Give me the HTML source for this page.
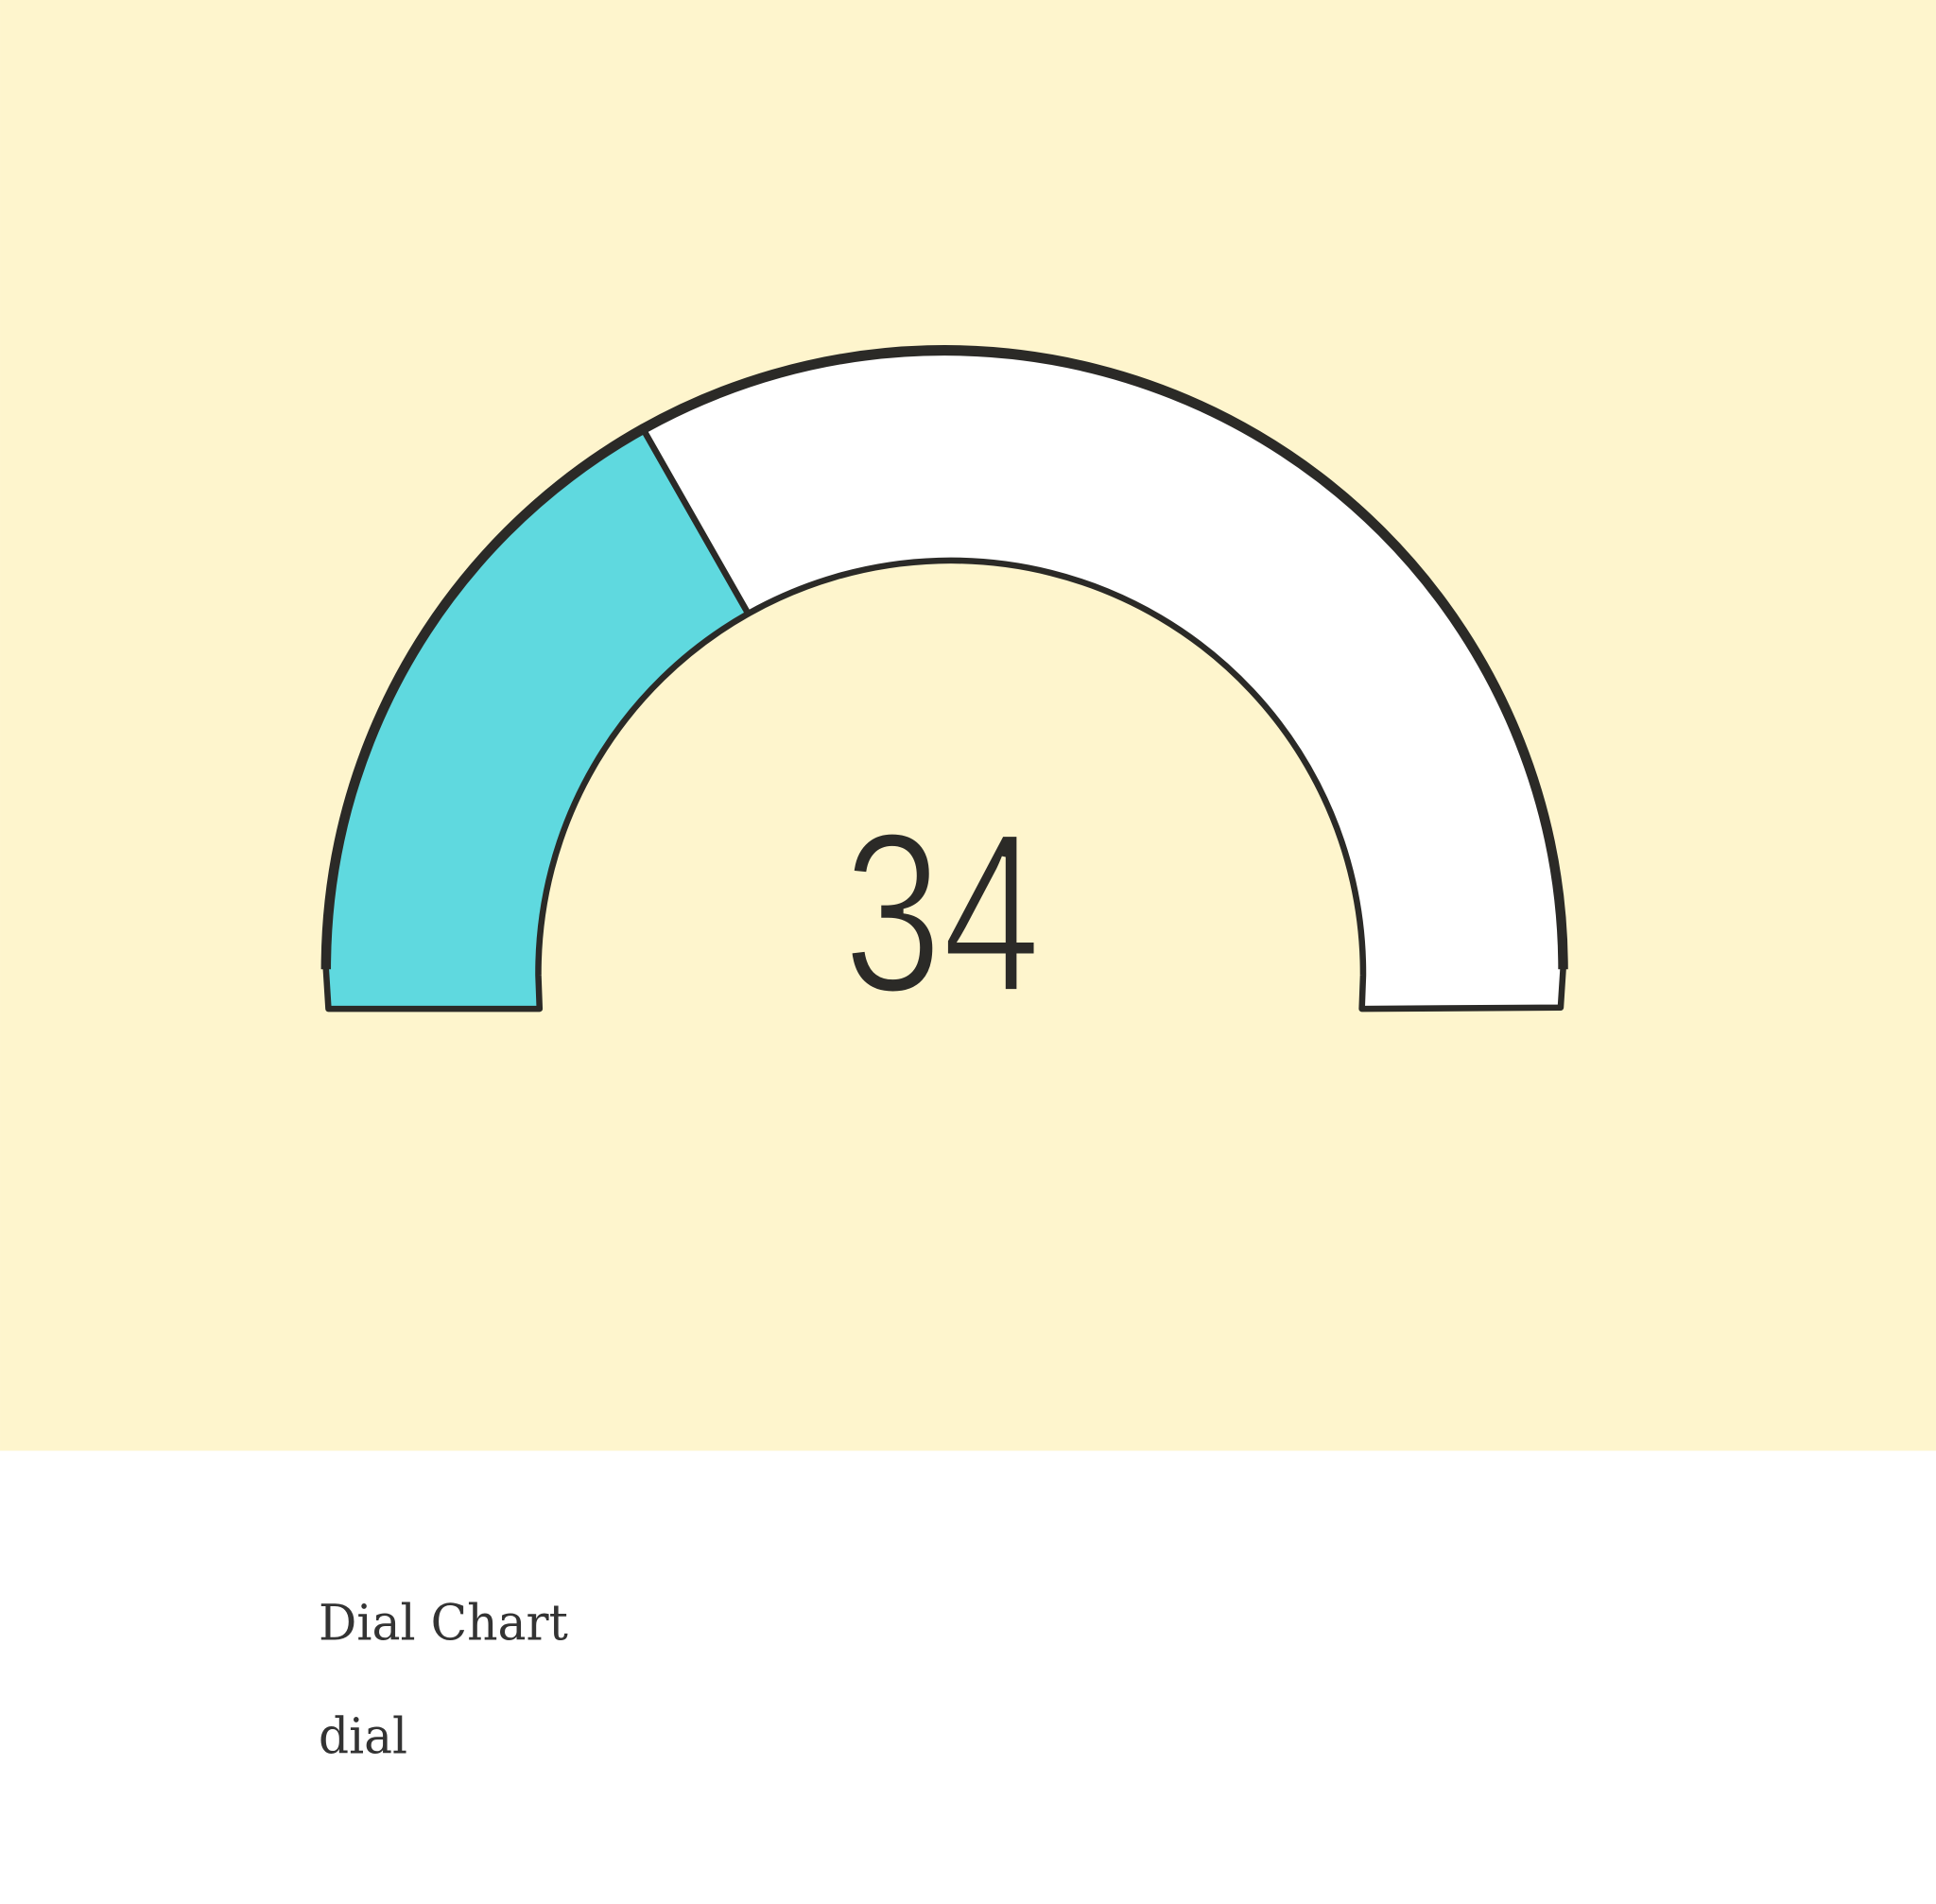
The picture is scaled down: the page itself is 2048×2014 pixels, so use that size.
<!DOCTYPE html>
<html>
<head>
<meta charset="utf-8">
<style>
  html, body { margin: 0; padding: 0; background: #fff; }
  body { width: 2048px; height: 2014px; overflow: hidden; }
  svg { display: block; }
</style>
</head>
<body>
<svg width="2048" height="2014" viewBox="0 0 1568 1542" xmlns="http://www.w3.org/2000/svg">
  <rect x="0" y="0" width="1568" height="1175" fill="#fef5cd"/>
  <rect x="0" y="1175" width="1568" height="367" fill="#ffffff"/>

  <path d="M266,817 L264,785 A501,501 0 0 1 520,346 L606,497 A334,334 0 0 0 436,790 L437,817 Z"
        fill="#5fd9df" stroke="#2b2a27" stroke-width="5" stroke-linejoin="round"/>
  <path d="M520,346 A501,501 0 0 1 1266,785 L1264,816 L1103,817 L1104,790 A334,334 0 0 0 606,497 Z"
        fill="#ffffff" stroke="#2b2a27" stroke-width="5" stroke-linejoin="round"/>
  <!-- thicker outer arc -->
  <path d="M264,785 A501,501 0 0 1 1266,785" fill="none" stroke="#2b2a27" stroke-width="8"/>
  <line x1="520" y1="346" x2="606" y2="497" stroke="#2b2a27" stroke-width="3"/>

  <text x="763" y="803" text-anchor="middle" font-family="'Liberation Sans', sans-serif"
        font-size="185" fill="#2b2a27" stroke="#fef5cd" stroke-width="4" paint-order="normal"
        textLength="160" lengthAdjust="spacingAndGlyphs">34</text>

  <text x="258" y="1328" font-family="'DejaVu Serif', serif" font-size="40" fill="#333" textLength="202" lengthAdjust="spacingAndGlyphs">Dial Chart</text>
  <text x="258" y="1420" font-family="'DejaVu Serif', serif" font-size="40" fill="#333" textLength="72" lengthAdjust="spacingAndGlyphs">dial</text>
</svg>
</body>
</html>
